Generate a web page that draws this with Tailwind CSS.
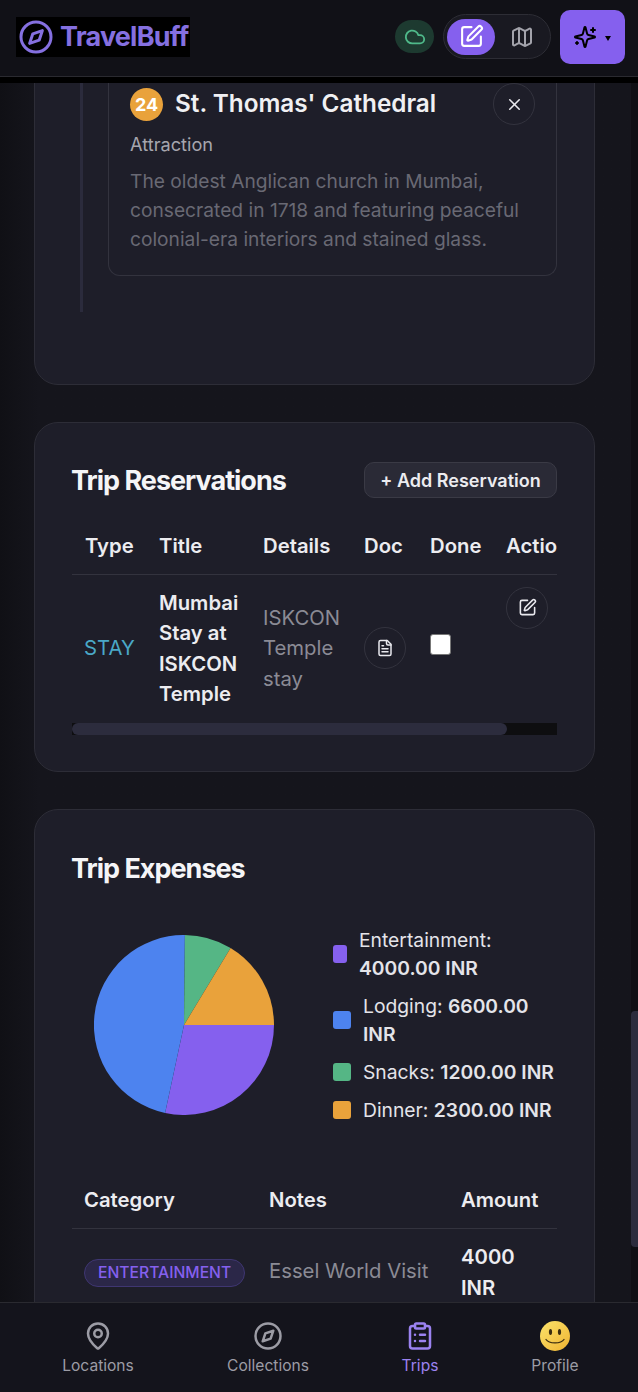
<!DOCTYPE html>
<html lang="en">
<head>
  <meta charset="UTF-8" />
  <meta name="viewport" content="width=device-width, initial-scale=1.0" />
  <title>TravelBuff</title>
  <script src="https://cdn.jsdelivr.net/npm/@tailwindcss/browser@4"></script>
</head>
<body class="bg-black font-['Inter',sans-serif] text-[#e9e9ee]">
<div class="relative flex flex-col w-[638px] h-[1392px] overflow-hidden">

  <!-- Header -->
  <header class="h-[77px] shrink-0 flex items-center bg-[#111117] border-b border-[#2a2a30] pl-4 pr-[13px] pb-[3px]">
    <div class="flex items-center gap-[6px] bg-black h-[40px] w-[174px] pl-[2px] mt-[1px]">
      <svg class="w-[36px] h-[36px] text-[#8570e0]" viewBox="0 0 24 24" fill="none" stroke="currentColor" stroke-width="2" stroke-linecap="round" stroke-linejoin="round"><circle cx="12" cy="12" r="10"/><path d="m16.24 7.76-2.12 6.36-6.36 2.12 2.12-6.36z"/></svg>
      <span class="text-[27px] font-bold tracking-[-0.8px] text-[#8570e0]">TravelBuff</span>
    </div>
    <div class="ml-auto w-[39px] h-[33px] rounded-full bg-[#1d3a30] flex items-center justify-center mr-[9px]">
      <svg class="w-[22px] h-[22px] text-[#4fb98a]" viewBox="0 0 24 24" fill="none" stroke="currentColor" stroke-width="2" stroke-linecap="round" stroke-linejoin="round"><path d="M17.5 19H9a7 7 0 1 1 6.71-9h1.79a4.5 4.5 0 1 1 0 9Z"/></svg>
    </div>
    <div class="flex items-center w-[108px] h-[45px] rounded-full border border-[#2d2d35] bg-[#191921] pl-[3px] mr-[9px]">
      <div class="w-[48px] h-[36px] rounded-full bg-[#8560ee] flex items-center justify-center">
        <svg class="w-[25px] h-[25px] text-white" viewBox="0 0 24 24" fill="none" stroke="currentColor" stroke-width="2" stroke-linecap="round" stroke-linejoin="round"><path d="M12 3H5a2 2 0 0 0-2 2v14a2 2 0 0 0 2 2h14a2 2 0 0 0 2-2v-7"/><path d="M18.375 2.625a1 1 0 0 1 3 3l-9.013 9.014a2 2 0 0 1-.853.505l-2.873.84a.5.5 0 0 1-.62-.62l.84-2.873a2 2 0 0 1 .506-.852z"/></svg>
      </div>
      <div class="w-[54px] flex justify-center">
        <svg class="w-[24px] h-[24px] text-[#a3a3ab]" viewBox="0 0 24 24" fill="none" stroke="currentColor" stroke-width="2" stroke-linecap="round" stroke-linejoin="round"><path d="M14.106 5.553a2 2 0 0 0 1.788 0l3.659-1.83A1 1 0 0 1 21 4.619v12.764a1 1 0 0 1-.553.894l-4.553 2.277a2 2 0 0 1-1.788 0l-4.212-2.106a2 2 0 0 0-1.788 0l-3.659 1.83A1 1 0 0 1 3 19.381V6.618a1 1 0 0 1 .553-.894l4.553-2.277a2 2 0 0 1 1.788 0z"/><path d="M15 5.764v15"/><path d="M9 3.236v15"/></svg>
      </div>
    </div>
    <div class="w-[65px] h-[54px] rounded-[10px] bg-[#8560ee] flex items-center pl-[13px] gap-[8px]">
      <svg class="w-[24px] h-[24px] text-black" viewBox="0 0 24 24" fill="none" stroke="currentColor" stroke-width="2" stroke-linecap="round" stroke-linejoin="round"><path d="M9.937 15.5A2 2 0 0 0 8.5 14.063l-6.135-1.582a.5.5 0 0 1 0-.962L8.5 9.936A2 2 0 0 0 9.937 8.5l1.582-6.135a.5.5 0 0 1 .963 0L14.063 8.5A2 2 0 0 0 15.5 9.937l6.135 1.581a.5.5 0 0 1 0 .964L15.5 14.063a2 2 0 0 0-1.437 1.437l-1.582 6.135a.5.5 0 0 1-.963 0z"/><path d="M20 3v4"/><path d="M22 5h-4"/><path d="M4 17v2"/><path d="M5 18H3"/></svg>
      <span class="w-0 h-0 border-x-[3.5px] border-x-transparent border-t-[5px] border-t-black mt-[3px]"></span>
    </div>
  </header>

  <main class="relative flex-1 overflow-hidden mt-[6px] bg-gradient-to-r from-[#101015] to-[#15151c] from-0% to-[6%]">
    <div class="flex flex-col gap-[37px] pl-[34px] pr-[43px] -mt-[40px]">

      <!-- Itinerary card (scrolled) -->
      <section class="h-[342px] shrink-0 rounded-[24px] border border-[#2d2d37] bg-[#1e1e29] pl-[45px] pr-[37px] relative">
        <div class="absolute left-[45px] top-0 h-[268px] w-[3px] bg-[#2b2b3c]"></div>
        <div class="ml-[28px] h-[232px] rounded-b-[12px] border border-t-0 border-[#33333e] px-[21px] pt-[39px]">
          <div class="flex items-center">
            <span class="w-[33px] h-[33px] rounded-full bg-[#e9a23b] flex items-center justify-center text-[18px] font-bold text-white">24</span>
            <h3 class="ml-[12px] -mt-[2px] text-[24.3px] font-semibold text-[#f0f0f3]">St. Thomas' Cathedral</h3>
            <button class="ml-auto w-[42px] h-[42px] rounded-full border border-[#33333e] flex items-center justify-center">
              <svg class="w-[19px] h-[19px] text-[#e9e9ee]" viewBox="0 0 24 24" fill="none" stroke="currentColor" stroke-width="2" stroke-linecap="round" stroke-linejoin="round"><path d="M18 6 6 18"/><path d="m6 6 12 12"/></svg>
            </button>
          </div>
          <p class="text-[18.2px] text-[#a6a6ae] mt-[5px] leading-[28px]">Attraction</p>
          <p class="mt-[9px] text-[19.2px] leading-[29px] text-[#696974]">The oldest Anglican church in Mumbai, consecrated in 1718 and featuring peaceful colonial-era interiors and stained glass.</p>
        </div>
      </section>

      <!-- Trip Reservations -->
      <section class="h-[350px] shrink-0 rounded-[24px] border border-[#2d2d37] bg-[#1e1e29] pl-[37px] pr-[37px] pt-[39px]">
        <div class="flex items-center justify-between h-[36px]">
          <h2 class="text-[27px] font-bold tracking-[-1px] text-[#f5f5f7] -ml-[1px] pt-[2px]">Trip Reservations</h2>
          <button class="w-[193px] h-[36px] rounded-[10px] border border-[#3a3a45] bg-[#2a2a36] text-[18px] font-semibold text-[#ececf0]">+ Add Reservation</button>
        </div>
        <div class="mt-[19px] h-[206px] overflow-hidden text-[20.3px]">
          <div class="flex h-[58px] pt-[2px] items-center border-b border-[#33333e] font-semibold text-[#ececf0] w-[542px]">
            <span class="w-[87px] shrink-0 pl-[13px]">Type</span>
            <span class="w-[104px] shrink-0">Title</span>
            <span class="w-[101px] shrink-0">Details</span>
            <span class="w-[66px] shrink-0">Doc</span>
            <span class="w-[76px] shrink-0">Done</span>
            <span class="whitespace-nowrap">Actions</span>
          </div>
          <div class="flex items-center w-[542px] h-[145px]">
            <span class="w-[87px] shrink-0 pl-[12px] pt-[2px] text-[#4aa8c7]">STAY</span>
            <span class="w-[104px] shrink-0 pt-[2px] font-semibold leading-[30.5px] text-[#ececf0]">Mumbai<br>Stay at<br>ISKCON<br>Temple</span>
            <span class="w-[101px] shrink-0 pt-[2px] leading-[30.5px] text-[#8b8b95]">ISKCON<br>Temple<br>stay</span>
            <span class="w-[66px] shrink-0">
              <button class="w-[42px] h-[42px] rounded-full border border-[#33333e] flex items-center justify-center">
                <svg class="w-[18px] h-[18px] text-[#e9e9ee]" viewBox="0 0 24 24" fill="none" stroke="currentColor" stroke-width="2" stroke-linecap="round" stroke-linejoin="round"><path d="M15 2H6a2 2 0 0 0-2 2v16a2 2 0 0 0 2 2h12a2 2 0 0 0 2-2V7Z"/><path d="M14 2v4a2 2 0 0 0 2 2h4"/><path d="M10 9H8"/><path d="M16 13H8"/><path d="M16 17H8"/></svg>
              </button>
            </span>
            <span class="w-[76px] shrink-0"><span class="block w-[21px] h-[21px] rounded-[3px] bg-white border border-[#777] -mt-[6px]"></span></span>
            <span class="-mt-[80px]">
              <button class="w-[42px] h-[42px] rounded-full border border-[#33333e] flex items-center justify-center">
                <svg class="w-[19px] h-[19px] text-[#e9e9ee]" viewBox="0 0 24 24" fill="none" stroke="currentColor" stroke-width="2" stroke-linecap="round" stroke-linejoin="round"><path d="M12 3H5a2 2 0 0 0-2 2v14a2 2 0 0 0 2 2h14a2 2 0 0 0 2-2v-7"/><path d="M18.375 2.625a1 1 0 0 1 3 3l-9.013 9.014a2 2 0 0 1-.853.505l-2.873.84a.5.5 0 0 1-.62-.62l.84-2.873a2 2 0 0 1 .506-.852z"/></svg>
              </button>
            </span>
          </div>
        </div>
        <div class="h-[12px] bg-[#0e0e10]">
          <div class="h-full w-[435px] rounded-full bg-[#2c2c3d]"></div>
        </div>
      </section>

      <!-- Trip Expenses -->
      <section class="rounded-[24px] border border-[#2d2d37] bg-[#1e1e29] pl-[37px] pr-[37px] pt-[41px] h-[600px] shrink-0">
        <h2 class="text-[27px] font-bold tracking-[-1px] text-[#f5f5f7] leading-[36px] -ml-[1px]">Trip Expenses</h2>
        <div class="flex items-center mt-[39px]">
          <svg class="ml-[22px] w-[180px] h-[180px] shrink-0" viewBox="0 0 180 180">
            <path fill="#8560ee" d="M90 90 L180 90 A90 90 0 0 1 71.1 178 Z"/>
            <path fill="#4d83ef" d="M90 90 L71.1 178 A90 90 0 0 1 90.9 0 Z"/>
            <path fill="#55b685" d="M90 90 L90.9 0 A90 90 0 0 1 136.6 13 Z"/>
            <path fill="#e9a23b" d="M90 90 L136.6 13 A90 90 0 0 1 180 90 Z"/>
          </svg>
          <ul class="ml-[59px] text-[19.3px] leading-[28px] text-[#e4e4e9] flex flex-col gap-[10px]">
            <li class="flex items-center gap-[12px]"><span class="w-[14px] h-[18px] rounded-[3px] bg-[#8560ee] shrink-0"></span><span>Entertainment: <b class="font-semibold">4000.00 INR</b></span></li>
            <li class="flex items-center gap-[12px]"><span class="w-[18px] h-[18px] rounded-[3px] bg-[#4d83ef] shrink-0"></span><span>Lodging: <b class="font-semibold">6600.00 INR</b></span></li>
            <li class="flex items-center gap-[12px]"><span class="w-[18px] h-[18px] rounded-[3px] bg-[#55b685] shrink-0"></span><span>Snacks: <b class="font-semibold">1200.00 INR</b></span></li>
            <li class="flex items-center gap-[12px]"><span class="w-[18px] h-[18px] rounded-[3px] bg-[#e9a23b] shrink-0"></span><span>Dinner: <b class="font-semibold">2300.00 INR</b></span></li>
          </ul>
        </div>
        <div class="mt-[47px] flex h-[58px] pt-[2px] items-center border-b border-[#33333e] font-semibold text-[20.3px] text-[#ececf0]">
          <span class="w-[197px] pl-[12px]">Category</span>
          <span class="w-[192px]">Notes</span>
          <span>Amount</span>
        </div>
        <div class="flex items-center h-[85px] text-[20.3px]">
          <span class="w-[197px] pl-[12px]"><span class="inline-flex items-center h-[28px] px-[13px] rounded-full border border-[#3f3672] bg-[#2b2748] text-[15.7px] font-medium text-[#8560ee]">ENTERTAINMENT</span></span>
          <span class="w-[192px] text-[#8b8b95]">Essel World Visit</span>
          <span class="font-semibold leading-[31px] text-[#ececf0]">4000<br>INR</span>
        </div>
      </section>
    </div>
    <!-- scrollbar -->
    <div class="absolute right-0 top-0 bottom-0 w-[7px] bg-[#0f0f14]">
      <div class="mt-[928px] h-[236px] rounded-l-[4px] bg-[#2c2c3d]"></div>
    </div>
  </main>

  <!-- Bottom nav -->
  <nav class="h-[90px] shrink-0 bg-[#14141c] border-t border-[#2a2a30] flex pt-[18px] text-[15.6px] leading-[23px] text-[#9c9ca5]">
    <a class="w-[196px] flex flex-col items-center gap-[3px]">
      <span class="h-[30px] flex items-center"><svg class="w-[30px] h-[30px]" viewBox="0 0 24 24" fill="none" stroke="currentColor" stroke-width="2" stroke-linecap="round" stroke-linejoin="round"><path d="M20 10c0 4.993-5.539 10.193-7.399 11.799a1 1 0 0 1-1.202 0C9.539 20.193 4 14.993 4 10a8 8 0 0 1 16 0"/><circle cx="12" cy="10" r="3"/></svg></span>
      <span>Locations</span>
    </a>
    <a class="w-[144px] flex flex-col items-center gap-[3px]">
      <span class="h-[30px] flex items-center"><svg class="w-[30px] h-[30px]" viewBox="0 0 24 24" fill="none" stroke="currentColor" stroke-width="2" stroke-linecap="round" stroke-linejoin="round"><circle cx="12" cy="12" r="10"/><path d="m16.24 7.76-2.12 6.36-6.36 2.12 2.12-6.36z"/></svg></span>
      <span>Collections</span>
    </a>
    <a class="w-[160px] flex flex-col items-center gap-[3px] text-[#9b82f0]">
      <span class="h-[30px] flex items-center"><svg class="w-[30px] h-[30px]" viewBox="0 0 24 24" fill="none" stroke="currentColor" stroke-width="2" stroke-linecap="round" stroke-linejoin="round"><rect width="8" height="4" x="8" y="2" rx="1"/><path d="M16 4h2a2 2 0 0 1 2 2v14a2 2 0 0 1-2 2H6a2 2 0 0 1-2-2V6a2 2 0 0 1 2-2h2"/><path d="M12 11h4"/><path d="M12 16h4"/><path d="M8 11h.01"/><path d="M8 16h.01"/></svg></span>
      <span>Trips</span>
    </a>
    <a class="w-[110px] flex flex-col items-center gap-[3px]">
      <span class="block w-[30px] h-[30px] rounded-full bg-gradient-to-br from-[#fbe36a] to-[#efb42f]">
        <svg class="w-[30px] h-[30px]" viewBox="0 0 30 30" fill="none"><ellipse cx="10.5" cy="11" rx="1.6" ry="3" fill="#3a2c10"/><ellipse cx="19.5" cy="11" rx="1.6" ry="3" fill="#3a2c10"/><path d="M6 18.5c3 4.5 15 4.5 18 0" stroke="#3a2c10" stroke-width="1.3" stroke-linecap="round"/></svg>
      </span>
      <span>Profile</span>
    </a>
  </nav>
</div>
</body>
</html>
